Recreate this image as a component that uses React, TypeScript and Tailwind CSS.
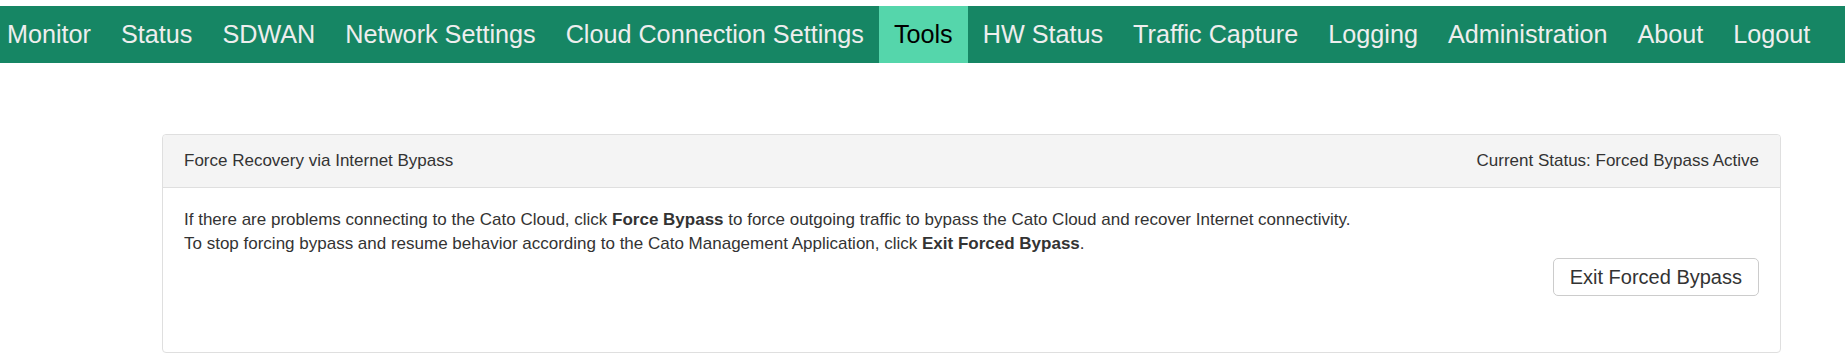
import React from "react";

const items = [
  "Monitor",
  "Status",
  "SDWAN",
  "Network Settings",
  "Cloud Connection Settings",
  "Tools",
  "HW Status",
  "Traffic Capture",
  "Logging",
  "Administration",
  "About",
  "Logout",
];

export default function App() {
  return (
    <div className="w-[1845px] h-[363px] bg-white font-['Liberation_Sans',Arial,sans-serif] overflow-hidden">
      <nav className="mt-[6px] h-[57px] bg-[#168664] flex items-stretch">
        <ul className="flex items-stretch -ml-[8px]">
          {items.map((it) => (
            <li
              key={it}
              className={
                it === "Tools"
                  ? "flex items-center px-[15px] text-[25.2px] bg-[#55d6ab] text-black"
                  : "flex items-center px-[15px] text-[25.2px] text-[#eeeeee]"
              }
            >
              {it}
            </li>
          ))}
        </ul>
      </nav>
      <div className="mt-[71px] ml-[162px] w-[1619px] border border-[#dfdfdf] rounded-[4px] text-[17px] leading-[24px] text-[#333333]">
        <div className="h-[53px] flex items-center justify-between px-[21px] bg-[#f4f4f4] border-b border-[#dfdfdf] rounded-t-[4px]">
          <span>Force Recovery via Internet Bypass</span>
          <span>Current Status: Forced Bypass Active</span>
        </div>
        <div className="px-[21px] pt-[20px] pb-[20px]">
          <p>
            If there are problems connecting to the Cato Cloud, click <b>Force Bypass</b> to force outgoing traffic to bypass the Cato Cloud and recover Internet connectivity.
          </p>
          <p>
            To stop forcing bypass and resume behavior according to the Cato Management Application, click <b>Exit Forced Bypass</b>.
          </p>
          <div className="flex justify-end mt-[2px]">
            <button className="h-[38px] px-[16px] border border-[#cccccc] rounded-[5px] bg-white text-[20px] text-[#333333]">
              Exit Forced Bypass
            </button>
          </div>
          <div className="h-[36px]" />
        </div>
      </div>
    </div>
  );
}
